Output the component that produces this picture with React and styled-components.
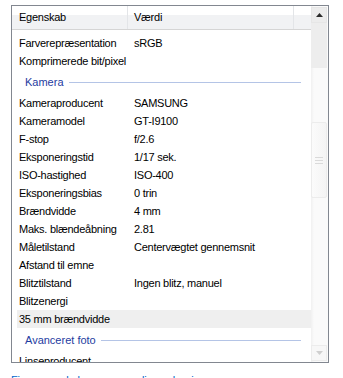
import React from 'react'
import styled, { createGlobalStyle } from 'styled-components'

const GlobalStyle = createGlobalStyle`
html, body {
  margin: 0;
  padding: 0;
  background: #fff;
}
body {
  font-family: "Liberation Sans", Arial, sans-serif;
  font-size: 11px;
  color: #000;
  overflow: hidden;
}
`

const camera = [
  ['Kameraproducent', 'SAMSUNG'],
  ['Kameramodel', 'GT-I9100'],
  ['F-stop', 'f/2.6'],
  ['Eksponeringstid', '1/17 sek.'],
  ['ISO-hastighed', 'ISO-400'],
  ['Eksponeringsbias', '0 trin'],
  ['Brændvidde', '4 mm'],
  ['Maks. blændeåbning', '2.81'],
  ['Måletilstand', 'Centervægtet gennemsnit'],
  ['Afstand til emne', ''],
  ['Blitztilstand', 'Ingen blitz, manuel'],
  ['Blitzenergi', ''],
  ['35 mm brændvidde', '', true],
]

const Page = styled.div`
  padding: 5px 0 0 11px;
  width: 343px;
  height: 378px;
  box-sizing: border-box;
  overflow: hidden;
`

const Panel = styled.div`
  width: 318px;
  height: 358px;
  box-sizing: border-box;
  border: 1px solid #828790;
  display: flex;
  overflow: hidden;
`

const Main = styled.div`
  flex: 1;
  display: flex;
  flex-direction: column;
  overflow: hidden;
`

const Header = styled.div`
  display: grid;
  grid-template-columns: 116px 166px 1fr;
  height: 24px;
  box-sizing: border-box;
  border-bottom: 1px solid #d5d5d5;
  background: linear-gradient(#fff 0, #fff 9px, #f1f2f4 9px, #f1f2f4 100%);
  flex-shrink: 0;
`

const HeaderCell = styled.div`
  padding-left: ${p => p.$pad}px;
  line-height: 23px;
  letter-spacing: -0.25px;
  border-right: ${p => (p.$last ? 'none' : '1px solid #e3e5e8')};
`

const List = styled.div`
  padding-top: 4px;
`

const Row = styled.div`
  display: grid;
  grid-template-columns: 110px 166px;
  margin-left: 5px;
  height: 18px;
  line-height: 18px;
  letter-spacing: -0.25px;
  white-space: nowrap;
  background: ${p => (p.$selected ? '#efefef' : 'transparent')};
`

const Label = styled.span`
  padding-left: 2px;
  overflow: hidden;
`

const Value = styled.span`
  padding-left: 7px;
  overflow: hidden;
`

const Group = styled.div`
  display: flex;
  align-items: center;
  height: 24px;
  line-height: 24px;
  margin: 0 10px 0 5px;
  padding-left: 8px;
  color: #1e3c9f;
  white-space: nowrap;

  &::after {
    content: '';
    flex: 1;
    height: 1px;
    margin-left: 5px;
    background: #b4c4e6;
  }
`

const Scrollbar = styled.div`
  width: 17px;
  flex-shrink: 0;
  display: flex;
  flex-direction: column;
  padding: 1px 1px 1px 0;
  box-sizing: border-box;
  background: linear-gradient(90deg, #f0f0f0, #fafafa 3px, #fafafa);
`

const ArrowButton = styled.div`
  height: 16px;
  flex-shrink: 0;
  display: flex;
  align-items: center;
  justify-content: center;
  box-sizing: border-box;
  background: ${p => (p.$dim ? '#f7f7f7' : '#ececec')};
  border: 1px solid ${p => (p.$dim ? '#ececec' : '#e6e6e6')};
`

const Track = styled.div`
  height: ${p => p.$h}px;
  flex-shrink: 0;
  background: ${p => (p.$dark ? '#ededed' : 'transparent')};
`

const Thumb = styled.div`
  height: 76px;
  flex-shrink: 0;
  box-sizing: border-box;
  border: 1px solid #ececec;
  border-radius: 2px;
  background: linear-gradient(90deg, #fbfbfb, #f4f4f4);
  display: flex;
  align-items: center;
  justify-content: center;
`

const Grip = styled.div`
  width: 8px;
  height: 7px;
  background: repeating-linear-gradient(#dadada 0, #dadada 1px, transparent 1px, transparent 3px);
`

const Filler = styled.div`
  flex: 1;
`

const Link = styled.div`
  margin-top: 8px;
  line-height: 18px;
  color: #0066cc;
  letter-spacing: -0.25px;
  white-space: nowrap;
`

const Arrow = ({ up, color }) => (
  <svg width="7" height="4" viewBox="0 0 7 4">
    <path d={up ? 'M0 4 L3.5 0 L7 4 Z' : 'M0 0 L3.5 4 L7 0 Z'} fill={color} />
  </svg>
)

export default function App() {
  return (
    <>
      <GlobalStyle />
      <Page>
        <Panel>
          <Main>
            <Header>
              <HeaderCell $pad={7}>Egenskab</HeaderCell>
              <HeaderCell $pad={6}>Værdi</HeaderCell>
              <HeaderCell $last />
            </Header>
            <List>
              <Row>
                <Label>Farverepræsentation</Label>
                <Value>sRGB</Value>
              </Row>
              <Row>
                <Label>Komprimerede bit/pixel</Label>
                <Value />
              </Row>
              <Group>Kamera</Group>
              {camera.map(([label, value, selected]) => (
                <Row key={label} $selected={selected}>
                  <Label>{label}</Label>
                  <Value>{value}</Value>
                </Row>
              ))}
              <Group>Avanceret foto</Group>
              <Row>
                <Label>Linseproducent</Label>
                <Value />
              </Row>
            </List>
          </Main>
          <Scrollbar>
            <ArrowButton>
              <Arrow up color="#2b2b2b" />
            </ArrowButton>
            <Track $h={45} $dark />
            <Track $h={54} />
            <Thumb>
              <Grip />
            </Thumb>
            <Filler />
            <ArrowButton $dim>
              <Arrow color="#cfcfcf" />
            </ArrowButton>
          </Scrollbar>
        </Panel>
        <Link>Fjern egenskaber og personlige oplysninger</Link>
      </Page>
    </>
  )
}
